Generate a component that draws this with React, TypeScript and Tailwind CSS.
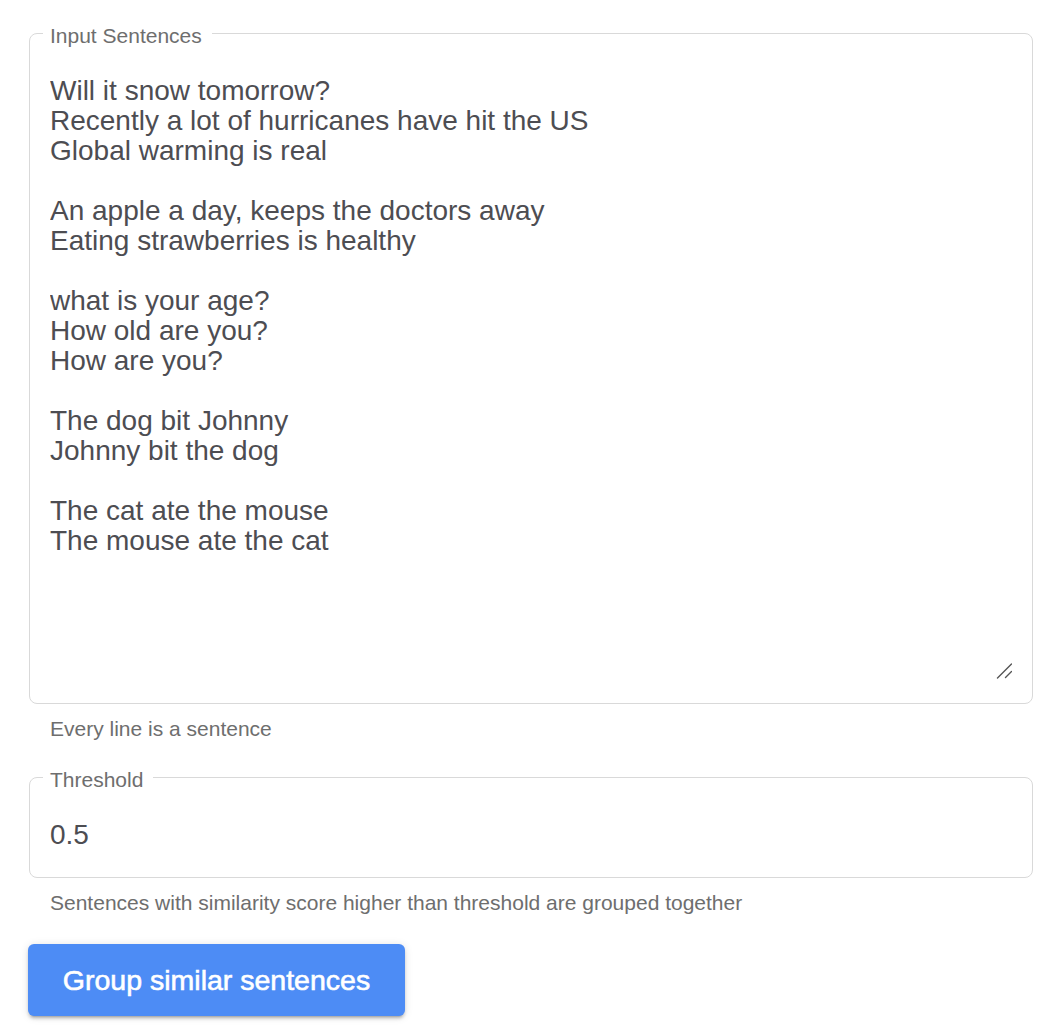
import { useState } from "react";

const SENTENCES = `Will it snow tomorrow?
Recently a lot of hurricanes have hit the US
Global warming is real

An apple a day, keeps the doctors away
Eating strawberries is healthy

what is your age?
How old are you?
How are you?

The dog bit Johnny
Johnny bit the dog

The cat ate the mouse
The mouse ate the cat`;

export default function App() {
  const [text, setText] = useState(SENTENCES);
  const [threshold, setThreshold] = useState("0.5");

  return (
    <div className="min-h-screen bg-white pl-[29px] pt-[18px] font-['Liberation_Sans',Arial,sans-serif]">
      <div className="flex w-[1004px] flex-col">
        <fieldset className="rounded-[8px] border border-[#d9d9d9] px-[20px] pt-[28px] pb-[22px]">
          <legend className="-ml-[7px] pl-[7px] pr-[10px] pt-[6px] text-[21px] leading-[24px] text-[#6e6e6e]">Input Sentences</legend>
          <div className="relative">
            <textarea
              value={text}
              onChange={(e) => setText(e.target.value)}
              className="block h-[605px] w-full resize-none bg-transparent p-0 text-[28px] leading-[30px] text-[#4d4d52] outline-none"
            />
            {/* resize grip */}
            <svg className="pointer-events-none absolute right-0 bottom-[2px]" width={16} height={16} viewBox="0 0 16 16" aria-hidden="true">
              <path d="M1.5 15L15.5 1M9.5 14.5L15.5 8.5" stroke="#555" strokeWidth="1.4" strokeLinecap="round" />
            </svg>
          </div>
        </fieldset>
        <p className="mt-[13px] pl-[21px] text-[21px] leading-[24px] text-[#6e6e6e]">Every line is a sentence</p>

        <fieldset className="mt-[21px] rounded-[8px] border border-[#d9d9d9] px-[20px] pt-[28px] pb-[27px]">
          <legend className="-ml-[7px] pl-[7px] pr-[10px] pt-[6px] text-[21px] leading-[24px] text-[#6e6e6e]">Threshold</legend>
          <input
            value={threshold}
            onChange={(e) => setThreshold(e.target.value)}
            className="block h-[30px] w-full bg-transparent p-0 text-[28px] leading-[30px] text-[#4d4d52] outline-none"
          />
        </fieldset>
        <p className="mt-[13px] pl-[21px] text-[21px] leading-[24px] text-[#6e6e6e]">
          Sentences with similarity score higher than threshold are grouped together
        </p>

        <div className="mt-[29px]">
          <button
            type="button"
            className="h-[72px] w-[377px] -ml-px rounded-[6px] bg-[#4d8cf5] text-[28.5px] text-white [-webkit-text-stroke:0.6px_#fff] shadow-[0_4px_2px_-3px_rgba(0,0,0,0.2),0_3px_3px_0_rgba(0,0,0,0.14),0_1px_8px_0_rgba(0,0,0,0.12)]"
          >
            Group similar sentences
          </button>
        </div>
      </div>
    </div>
  );
}
